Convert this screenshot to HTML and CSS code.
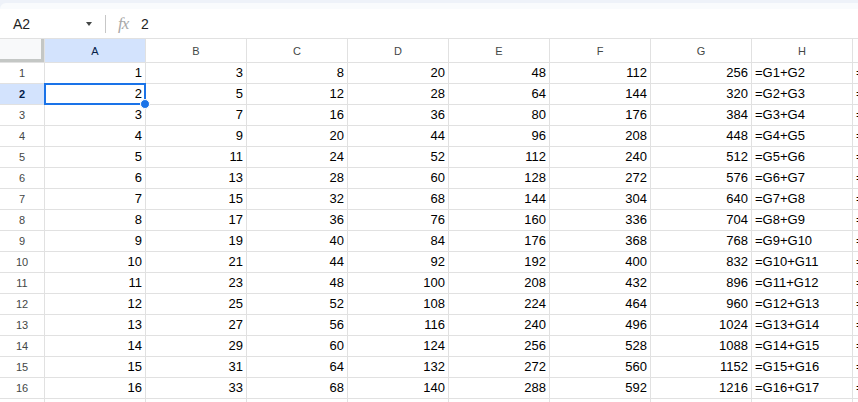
FILE: index.html
```html
<!DOCTYPE html>
<html>
<head>
<meta charset="utf-8">
<link rel="stylesheet" href="styles.css">
</head>
<body>
<div class="chrome"><div class="chrome-fade"></div></div>
<div class="fbar">
  <div class="namebox"><span class="ref">A2</span><span class="caret"></span></div>
  <div class="sep"></div>
  <span class="fx">fx</span>
  <span class="fval">2</span>
</div>
<div class="sheet">
  <div class="corner"></div>
  <div class="ch sel">A</div><div class="ch">B</div><div class="ch">C</div><div class="ch">D</div><div class="ch">E</div><div class="ch">F</div><div class="ch">G</div><div class="ch">H</div><div class="ch"></div>

  <div class="rh">1</div><div class="n">1</div><div class="n">3</div><div class="n">8</div><div class="n">20</div><div class="n">48</div><div class="n">112</div><div class="n">256</div><div class="t">=G1+G2</div><div class="t">=H1+H2</div>
  <div class="rh sel">2</div><div class="n cur">2<div class="selbox"><span class="handle"></span></div></div><div class="n">5</div><div class="n">12</div><div class="n">28</div><div class="n">64</div><div class="n">144</div><div class="n">320</div><div class="t">=G2+G3</div><div class="t">=H2+H3</div>
  <div class="rh">3</div><div class="n">3</div><div class="n">7</div><div class="n">16</div><div class="n">36</div><div class="n">80</div><div class="n">176</div><div class="n">384</div><div class="t">=G3+G4</div><div class="t">=H3+H4</div>
  <div class="rh">4</div><div class="n">4</div><div class="n">9</div><div class="n">20</div><div class="n">44</div><div class="n">96</div><div class="n">208</div><div class="n">448</div><div class="t">=G4+G5</div><div class="t">=H4+H5</div>
  <div class="rh">5</div><div class="n">5</div><div class="n">11</div><div class="n">24</div><div class="n">52</div><div class="n">112</div><div class="n">240</div><div class="n">512</div><div class="t">=G5+G6</div><div class="t">=H5+H6</div>
  <div class="rh">6</div><div class="n">6</div><div class="n">13</div><div class="n">28</div><div class="n">60</div><div class="n">128</div><div class="n">272</div><div class="n">576</div><div class="t">=G6+G7</div><div class="t">=H6+H7</div>
  <div class="rh">7</div><div class="n">7</div><div class="n">15</div><div class="n">32</div><div class="n">68</div><div class="n">144</div><div class="n">304</div><div class="n">640</div><div class="t">=G7+G8</div><div class="t">=H7+H8</div>
  <div class="rh">8</div><div class="n">8</div><div class="n">17</div><div class="n">36</div><div class="n">76</div><div class="n">160</div><div class="n">336</div><div class="n">704</div><div class="t">=G8+G9</div><div class="t">=H8+H9</div>
  <div class="rh">9</div><div class="n">9</div><div class="n">19</div><div class="n">40</div><div class="n">84</div><div class="n">176</div><div class="n">368</div><div class="n">768</div><div class="t">=G9+G10</div><div class="t">=H9+H10</div>
  <div class="rh">10</div><div class="n">10</div><div class="n">21</div><div class="n">44</div><div class="n">92</div><div class="n">192</div><div class="n">400</div><div class="n">832</div><div class="t">=G10+G11</div><div class="t">=H10+H11</div>
  <div class="rh">11</div><div class="n">11</div><div class="n">23</div><div class="n">48</div><div class="n">100</div><div class="n">208</div><div class="n">432</div><div class="n">896</div><div class="t">=G11+G12</div><div class="t">=H11+H12</div>
  <div class="rh">12</div><div class="n">12</div><div class="n">25</div><div class="n">52</div><div class="n">108</div><div class="n">224</div><div class="n">464</div><div class="n">960</div><div class="t">=G12+G13</div><div class="t">=H12+H13</div>
  <div class="rh">13</div><div class="n">13</div><div class="n">27</div><div class="n">56</div><div class="n">116</div><div class="n">240</div><div class="n">496</div><div class="n">1024</div><div class="t">=G13+G14</div><div class="t">=H13+H14</div>
  <div class="rh">14</div><div class="n">14</div><div class="n">29</div><div class="n">60</div><div class="n">124</div><div class="n">256</div><div class="n">528</div><div class="n">1088</div><div class="t">=G14+G15</div><div class="t">=H14+H15</div>
  <div class="rh">15</div><div class="n">15</div><div class="n">31</div><div class="n">64</div><div class="n">132</div><div class="n">272</div><div class="n">560</div><div class="n">1152</div><div class="t">=G15+G16</div><div class="t">=H15+H16</div>
  <div class="rh">16</div><div class="n">16</div><div class="n">33</div><div class="n">68</div><div class="n">140</div><div class="n">288</div><div class="n">592</div><div class="n">1216</div><div class="t">=G16+G17</div><div class="t">=H16+H17</div>
  <div class="rh"></div><div class="n"></div><div class="n"></div><div class="n"></div><div class="n"></div><div class="n"></div><div class="n"></div><div class="n"></div><div class="t"></div><div class="t"></div>
</div>
</body>
</html>
```
FILE: styles.css
```css
html, body {
  margin: 0;
  padding: 0;
  background: #fff;
  overflow: hidden;
  width: 858px;
  height: 402px;
  font-family: "Liberation Sans", Arial, sans-serif;
}

.chrome {
  height: 9px;
  box-sizing: border-box;
  padding-top: 3px;
  background: #eef2f9;
}
.chrome-fade {
  height: 6px;
  background: #f9fbfd;
  border-top-left-radius: 12px;
}

.fbar {
  height: 29px;
  display: flex;
  align-items: center;
  background: #fff;
}
.namebox {
  width: 105px;
  display: flex;
  align-items: center;
  box-sizing: border-box;
  padding-left: 13px;
}
.ref {
  font-size: 14px;
  color: #1f1f1f;
  width: 73px;
}
.caret {
  width: 0;
  height: 0;
  border-left: 3.5px solid transparent;
  border-right: 3.5px solid transparent;
  border-top: 4px solid #444746;
}
.sep {
  width: 1px;
  height: 18px;
  background: #c7c7c7;
}
.fx {
  margin-left: 12px;
  font-family: "Liberation Serif", serif;
  font-style: italic;
  font-size: 17px;
  color: #a8a8a8;
  width: 23px;
  letter-spacing: -1px;
}
.fval {
  font-size: 14px;
  color: #1f1f1f;
}

.sheet {
  display: grid;
  grid-template-columns: 44px repeat(9, 100px);
  grid-template-rows: 23px repeat(17, 20px);
  gap: 1px;
  background: #e1e1e1;
  border-top: 1px solid #e1e1e1;
}
.sheet > div {
  background: #fff;
  overflow: hidden;
  white-space: nowrap;
}
.corner {
  background: #f8f9fa !important;
  box-shadow: inset -3px -3px 0 #c4c7c5;
}
.ch {
  font-size: 11px;
  color: #444746;
  display: flex;
  align-items: center;
  justify-content: center;
}
.rh {
  font-size: 11px;
  color: #444746;
  display: flex;
  align-items: center;
  justify-content: center;
}
.ch.sel, .rh.sel {
  background: #d3e3fd !important;
  color: #041e49;
}
.rh.sel {
  font-weight: bold;
}
.n, .t {
  font-size: 13px;
  line-height: 20px;
  color: #000;
  padding: 0 3px;
}
.n {
  text-align: right;
}
.t {
  text-align: left;
}
.sheet > .cur {
  position: relative;
  overflow: visible;
  z-index: 2;
}
.selbox {
  position: absolute;
  left: -1px;
  top: -1px;
  right: -1px;
  bottom: -1px;
  border: 2px solid #1a73e8;
}
.handle {
  position: absolute;
  right: -6px;
  bottom: -6px;
  width: 8px;
  height: 8px;
  border-radius: 50%;
  background: #1a73e8;
  border: 1px solid #fff;
}
```
